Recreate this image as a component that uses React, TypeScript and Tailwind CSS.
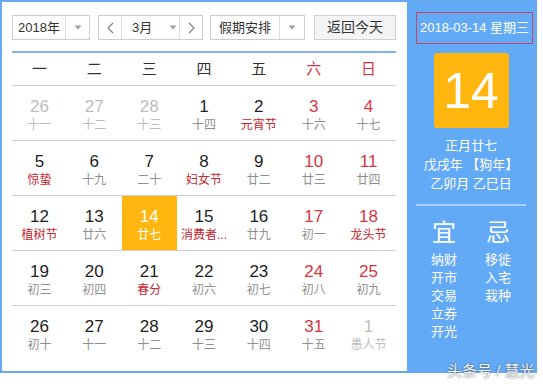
import React from "react";

type Cell = {
  day: number;
  lunar: string;
  dim?: boolean;
  redNum?: boolean;
  redLunar?: boolean;
  today?: boolean;
};

const weeks: Cell[][] = [
  [
    { day: 26, lunar: "十一", dim: true },
    { day: 27, lunar: "十二", dim: true },
    { day: 28, lunar: "十三", dim: true },
    { day: 1, lunar: "十四" },
    { day: 2, lunar: "元宵节", redLunar: true },
    { day: 3, lunar: "十六", redNum: true },
    { day: 4, lunar: "十七", redNum: true },
  ],
  [
    { day: 5, lunar: "惊蛰", redLunar: true },
    { day: 6, lunar: "十九" },
    { day: 7, lunar: "二十" },
    { day: 8, lunar: "妇女节", redLunar: true },
    { day: 9, lunar: "廿二" },
    { day: 10, lunar: "廿三", redNum: true },
    { day: 11, lunar: "廿四", redNum: true },
  ],
  [
    { day: 12, lunar: "植树节", redLunar: true },
    { day: 13, lunar: "廿六" },
    { day: 14, lunar: "廿七", today: true },
    { day: 15, lunar: "消费者...", redLunar: true },
    { day: 16, lunar: "廿九" },
    { day: 17, lunar: "初一", redNum: true },
    { day: 18, lunar: "龙头节", redNum: true, redLunar: true },
  ],
  [
    { day: 19, lunar: "初三" },
    { day: 20, lunar: "初四" },
    { day: 21, lunar: "春分", redLunar: true },
    { day: 22, lunar: "初六" },
    { day: 23, lunar: "初七" },
    { day: 24, lunar: "初八", redNum: true },
    { day: 25, lunar: "初九", redNum: true },
  ],
  [
    { day: 26, lunar: "初十" },
    { day: 27, lunar: "十一" },
    { day: 28, lunar: "十二" },
    { day: 29, lunar: "十三" },
    { day: 30, lunar: "十四" },
    { day: 31, lunar: "十五", redNum: true },
    { day: 1, lunar: "愚人节", dim: true },
  ],
];

const weekdays = ["一", "二", "三", "四", "五", "六", "日"];

function Caret() {
  return (
    <svg width="8" height="5" viewBox="0 0 8 5">
      <path d="M0.5 0.5 L7.5 0.5 L4 4.5 Z" fill="#a0a0a0" />
    </svg>
  );
}

function Chevron({ dir }: { dir: "left" | "right" }) {
  return (
    <svg width="7" height="12" viewBox="0 0 7 12">
      <polyline
        points={dir === "left" ? "6,1 1,6 6,11" : "1,1 6,6 1,11"}
        fill="none"
        stroke="#808080"
        strokeWidth="1.2"
      />
    </svg>
  );
}

function DayCell({ c }: { c: Cell }) {
  let numColor = "text-[#1e1e1e]";
  if (c.redNum) numColor = "text-[#d8353f]";
  if (c.dim) numColor = "text-[#bdbdbd]";
  let lunarColor = "text-[#8f8f8f]";
  if (c.redLunar) lunarColor = "text-[#c8232e]";
  if (c.dim) lunarColor = "text-[#bdbdbd]";
  if (c.today) {
    numColor = "text-white";
    lunarColor = "text-white";
  }
  return (
    <div
      className={`flex flex-col items-center pt-[11px] ${c.today ? "bg-[#ffb70f]" : ""}`}
    >
      <span className={`text-[17px] leading-[20px] ${numColor}`}>{c.day}</span>
      <span className={`text-[12px] leading-[17px] whitespace-nowrap ${lunarColor}`}>
        {c.lunar}
      </span>
    </div>
  );
}

export default function App() {
  return (
    <div
      className="relative w-[543px] h-[386px] bg-white"
      style={{ fontFamily: '"Liberation Sans", "Noto Sans CJK SC", sans-serif' }}
    >
      <div className="flex w-[537px] h-[373px] border-2 border-[#66a9f0]">
        {/* Left: calendar grid */}
        <div className="w-[405px] bg-white pl-[10px] pr-[11px] pt-[13px]">
          <div className="flex h-[25px] text-[13px] text-[#333]">
            <div className="flex w-[78px] border border-[#cccccc]">
              <div className="flex-1 flex items-center justify-center">2018年</div>
              <div className="w-[24px] border-l border-[#dddddd] flex items-center justify-center">
                <Caret />
              </div>
            </div>
            <div className="flex w-[105px] ml-[8px] border border-[#cccccc]">
              <div className="w-[23px] border-r border-[#dddddd] flex items-center justify-center">
                <Chevron dir="left" />
              </div>
              <div className="flex-1 flex items-center pl-[10px] gap-[17px]">
                <span>3月</span>
                <Caret />
              </div>
              <div className="w-[23px] border-l border-[#dddddd] flex items-center justify-center">
                <Chevron dir="right" />
              </div>
            </div>
            <div className="flex w-[95px] ml-[7px] border border-[#cccccc]">
              <div className="flex-1 flex items-center justify-center">假期安排</div>
              <div className="w-[25px] border-l border-[#dddddd] flex items-center justify-center">
                <Caret />
              </div>
            </div>
            <div className="w-[82px] ml-[9px] border border-[#d0d0d0] bg-[#f4f4f4] flex items-center justify-center text-[14px]">
              返回今天
            </div>
          </div>

          <div className="mt-[11px] border-t-2 border-[#7db2e8]" />

          <div className="grid grid-cols-7 h-[33px] items-center border-b border-[#cfcfcf] text-[15px]">
            {weekdays.map((w, i) => (
              <div
                key={w}
                className={`text-center ${i >= 5 ? "text-[#d8353f]" : "text-[#333]"}`}
              >
                {w}
              </div>
            ))}
          </div>

          {weeks.map((row, ri) => (
            <div
              key={ri}
              className={`grid grid-cols-7 h-[55px] ${ri < weeks.length - 1 ? "border-b border-[#cfcfcf]" : ""}`}
            >
              {row.map((c, ci) => (
                <DayCell key={ci} c={c} />
              ))}
            </div>
          ))}
        </div>

        {/* Right: today detail */}
        <div className="flex-1 bg-[#62a9f6] flex flex-col items-center text-white">
          <div className="mt-[10px] ml-[9px] self-start w-[117px] h-[32px] border border-[#c9466a] flex items-center justify-center text-[13px]">
            2018-03-14 星期三
          </div>
          <div className="mt-[9px] w-[75px] h-[75px] rounded-[3px] bg-[#ffb70f] flex items-center justify-center text-[50px] leading-none">
            14
          </div>
          <div className="mt-[8px] flex flex-col items-center text-[13px] leading-[19px]">
            <span>正月廿七</span>
            <span>戊戌年 【狗年】</span>
            <span>乙卯月 乙巳日</span>
          </div>
          <div className="mt-[11px] w-[110px] h-[2px] bg-[#a9cff8]" />
          <div className="mt-[13px] flex gap-[28px]">
            <div className="w-[26px] flex flex-col items-center">
              <span className="text-[24px] leading-[28px]">宜</span>
              <div className="mt-[4px] flex flex-col items-center text-[13px] leading-[18px]">
                <span>纳财</span>
                <span>开市</span>
                <span>交易</span>
                <span>立券</span>
                <span>开光</span>
              </div>
            </div>
            <div className="w-[26px] flex flex-col items-center">
              <span className="text-[24px] leading-[28px]">忌</span>
              <div className="mt-[4px] flex flex-col items-center text-[13px] leading-[18px]">
                <span>移徙</span>
                <span>入宅</span>
                <span>栽种</span>
              </div>
            </div>
          </div>
        </div>
      </div>

      {/* watermark */}
      <div className="absolute left-[447px] top-[361px] text-[15px] leading-[20px] text-[#f2f2f2] [text-shadow:0_0_2px_rgba(60,60,60,0.9)] whitespace-nowrap">
        头条号 / 慧光
      </div>
    </div>
  );
}
